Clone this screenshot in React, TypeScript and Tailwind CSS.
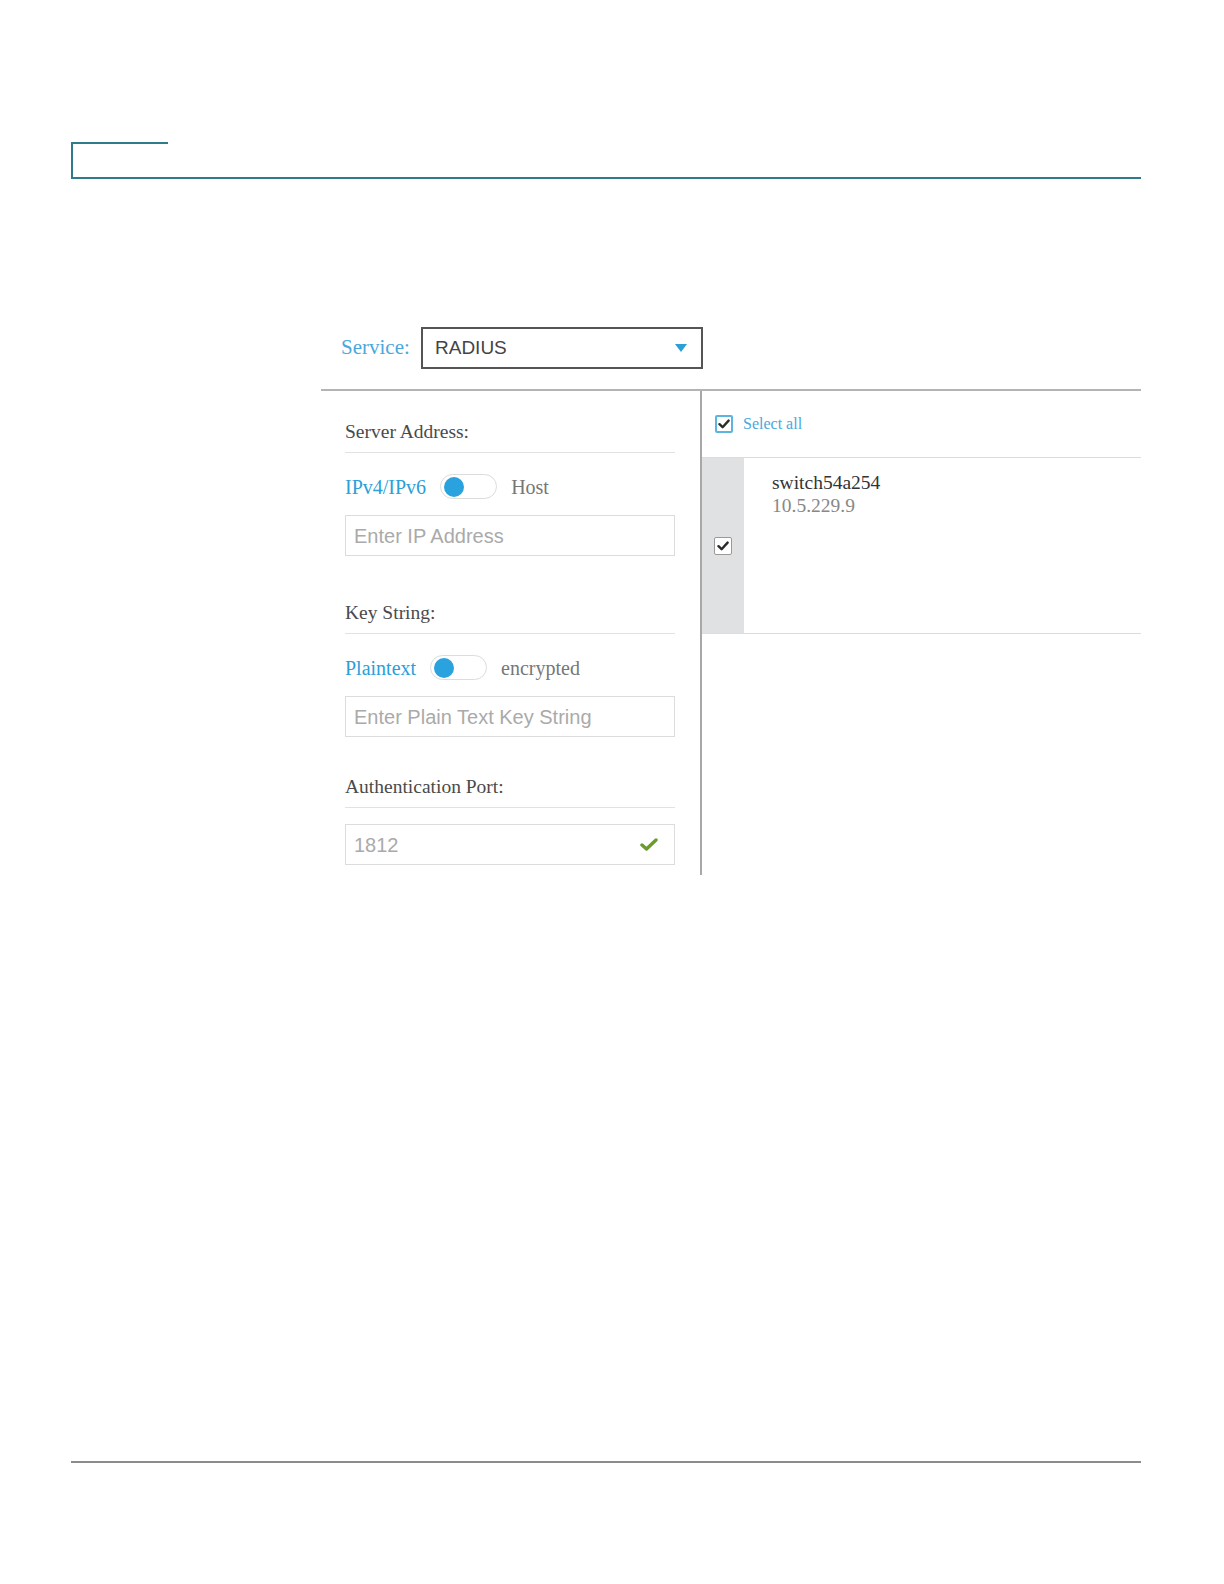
const serif = "font-['Liberation_Serif','Times_New_Roman',serif]";
const sans = "font-['Liberation_Sans',Arial,sans-serif]";

function Toggle() {
  return (
    <div className="flex h-[25px] w-[57px] items-center rounded-full border border-[#dcdcdc] bg-white pl-[3px]">
      <div className="h-[20px] w-[20px] rounded-full bg-[#2aa2dd]" />
    </div>
  );
}

function Check({ color }: { color: string }) {
  return (
    <svg width="12" height="10" viewBox="0 0 12 10" fill="none">
      <path d="M1.5 5.2 L4.6 8.2 L10.6 1.6" stroke={color} strokeWidth="2.4" strokeLinecap="round" strokeLinejoin="round" />
    </svg>
  );
}

function Box({ blue }: { blue?: boolean }) {
  return (
    <div
      className={
        blue
          ? "flex h-[18px] w-[18px] items-center justify-center rounded-[2px] border-2 border-[#5ab6e0] bg-white"
          : "flex h-[18px] w-[18px] items-center justify-center rounded-[2px] border border-[#999] bg-white"
      }
    >
      <Check color="#2b2b2b" />
    </div>
  );
}

function SectionLabel({ text, mt }: { text: string; mt: string }) {
  return (
    <div className={`${mt} border-b border-[#e2e2e2] pb-[8px]`}>
      <span className={`${serif} block text-[19.5px] leading-[24px] text-[#4a4a4a]`}>{text}</span>
    </div>
  );
}

function ModeRow({ on, off }: { on: string; off: string }) {
  return (
    <div className={`${serif} mt-[21px] flex h-[25px] items-center gap-[14px] text-[20px]`}>
      <span className="text-[#2a9fd8]">{on}</span>
      <Toggle />
      <span className="text-[#777]">{off}</span>
    </div>
  );
}

function TextField({ placeholder, value, valid }: { placeholder?: string; value?: string; valid?: boolean }) {
  return (
    <div className={`${sans} mt-[16px] flex h-[41px] items-center justify-between border border-[#dcdcdc] bg-white pl-[8px] pr-[16px] text-[20px]`}>
      <span className="text-[#aaa]">{value ?? placeholder}</span>
      {valid && (
        <svg width="18" height="13" viewBox="0 0 18 13" fill="none">
          <path d="M2 7 L6.5 11 L16 2" stroke="#6b9b2c" strokeWidth="3.4" strokeLinecap="round" strokeLinejoin="round" />
        </svg>
      )}
    </div>
  );
}

export default function App() {
  return (
    <div className="flex h-[1584px] w-full flex-col overflow-hidden bg-white">
      {/* page header tab */}
      <div className="ml-[71px] mt-[142px] h-[37px] w-[1070px] border-b-2 border-l-2 border-[#2f7b8c]">
        <div className="w-[95px] border-t-2 border-[#2f7b8c]" />
      </div>

      <div className="ml-[321px] mt-[148px] w-[820px]">
        {/* service select */}
        <div className="flex items-center pl-[20px]">
          <span className={`${serif} w-[80px] text-[21px] text-[#4aa8dc]`}>Service:</span>
          <div className={`${sans} flex h-[42px] w-[282px] items-center justify-between border-2 border-[#555] pl-[12px] pr-[14px] text-[19px] text-[#444]`}>
            <span>RADIUS</span>
            <svg width="12" height="8" viewBox="0 0 12 8">
              <path d="M0 0 H12 L6 8 Z" fill="#2a9fd8" />
            </svg>
          </div>
        </div>

        <div className="mt-[20px] h-[2px] bg-[#b4b4b4]" />

        <div className="flex">
          {/* left: server settings */}
          <div className="w-[381px] border-r-2 border-[#a8a8a8] pb-[10px] pl-[24px] pr-[25px]">
            <SectionLabel text="Server Address:" mt="mt-[29px]" />
            <ModeRow on="IPv4/IPv6" off="Host" />
            <TextField placeholder="Enter IP Address" />

            <SectionLabel text="Key String:" mt="mt-[45px]" />
            <ModeRow on="Plaintext" off="encrypted" />
            <TextField placeholder="Enter Plain Text Key String" />

            <SectionLabel text="Authentication Port:" mt="mt-[38px]" />
            <div className="mt-[7px]">
              <TextField value="1812" valid />
            </div>
          </div>

          {/* right: device list */}
          <div className="flex-1">
            <div className="flex h-[67px] items-center gap-[10px] border-b border-[#dcdcdc] pl-[13px]">
              <Box blue />
              <span className={`${serif} text-[16px] text-[#4aa8dc]`}>Select all</span>
            </div>
            <div className="flex h-[176px] border-b border-[#dcdcdc]">
              <div className="flex w-[42px] items-center justify-center bg-[#dfe1e3]">
                <Box />
              </div>
              <div className={`${serif} pl-[28px] pt-[13px] text-[19.5px] leading-[23px]`}>
                <div className="text-[#333]">switch54a254</div>
                <div className="text-[#888]">10.5.229.9</div>
              </div>
            </div>
          </div>
        </div>
      </div>

      <div className="mb-[121px] ml-[71px] mt-auto h-[2px] w-[1070px] bg-[#8c8c8c]" />
    </div>
  );
}
